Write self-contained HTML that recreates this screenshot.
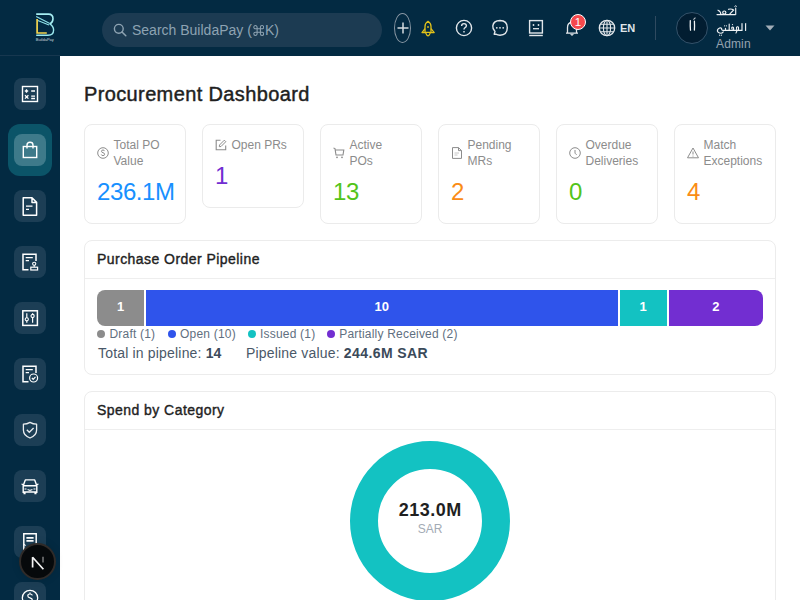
<!DOCTYPE html>
<html><head><meta charset="utf-8">
<style>
*{box-sizing:border-box;margin:0;padding:0}
html,body{width:800px;height:600px;overflow:hidden;background:#fff;font-family:"Liberation Sans",sans-serif}
.abs{position:absolute}
#hdr{position:absolute;left:0;top:0;width:800px;height:56px;background:#032a42}
#side{position:absolute;left:0;top:55px;width:60px;height:545px;background:#032a42;border-top:1px solid #17374f}
.tile{position:absolute;left:14px;width:32px;height:32px;border-radius:8px;background:#1c3e55}
.tile svg{position:absolute;left:6px;top:6px}
.card{position:absolute;top:124px;width:102px;border:1px solid #ebebeb;border-radius:8px;background:#fff}
.lbl{position:absolute;left:28.5px;top:12px;font-size:12px;line-height:16px;color:#8c8c8c;white-space:nowrap}
.ico{position:absolute;left:12px}
.val{position:absolute;left:12px;font-size:24px;line-height:36px;white-space:nowrap;letter-spacing:-0.4px}
.panel{position:absolute;left:84px;width:692px;border:1px solid #ececec;border-radius:8px;background:#fff}
.ptitle{position:absolute;left:12px;top:8px;font-size:14px;font-weight:400;line-height:20px;color:#1f1f1f;white-space:nowrap;letter-spacing:0.45px;-webkit-text-stroke:0.4px #1f1f1f}
.pline{position:absolute;left:0;top:37px;width:690px;height:1px;background:#eeeeee}
.hi{position:absolute}
.lg{top:85px;font-size:12px;line-height:16px;color:#5f6f80;white-space:nowrap;letter-spacing:0.2px}
</style></head><body>

<div id="hdr">
  <!-- logo -->
  <svg class="abs" style="left:34px;top:11px" width="22" height="32" viewBox="0 0 22 32">
    <path d="M2.2 3.1 H14.5 Q19 3.1 19 7.8 Q19 11.2 16 13" fill="none" stroke="#a6eef2" stroke-width="1.6"/>
    <path d="M2.2 5.6 L15.8 12.6 M3.8 9.6 L15 14" fill="none" stroke="#8fe3ea" stroke-width="1.1"/>
    <path d="M15.6 12.8 Q19.6 15 19.6 19 Q19.6 24.2 14 24.2 H2.2" fill="none" stroke="#9ae8ee" stroke-width="1.4"/>
    <path d="M3.1 8 V22 H12.8" fill="none" stroke="#f3d54e" stroke-width="1.7"/>
    <text x="1.8" y="30" font-size="4" fill="#c9d6de" font-family="Liberation Sans">BuildaPay</text>
  </svg>
  <!-- search -->
  <div class="abs" style="left:102px;top:13px;width:280px;height:34px;border-radius:17px;background:#1c3b52"></div>
  <svg class="abs" style="left:113px;top:23px" width="14" height="14" viewBox="0 0 14 14"><circle cx="5.8" cy="5.8" r="4.4" fill="none" stroke="#8ea3b2" stroke-width="1.4"/><path d="M9 9 L12.8 12.8" stroke="#8ea3b2" stroke-width="1.5" stroke-linecap="round"/></svg>
  <div class="abs" style="left:132px;top:20px;font-size:14px;line-height:20px;color:#8ea3b2;white-space:nowrap">Search BuildaPay (</div>
  <svg class="abs" style="left:252.5px;top:24.5px" width="11.5" height="11" viewBox="0 0 10 10"><path d="M3.5 3.5 V2 A1.5 1.5 0 1 0 2 3.5 H8 A1.5 1.5 0 1 0 6.5 2 V8 A1.5 1.5 0 1 0 8 6.5 H2 A1.5 1.5 0 1 0 3.5 8 Z" fill="none" stroke="#8ea3b2" stroke-width="0.95"/></svg>
  <div class="abs" style="left:265px;top:20px;font-size:14px;line-height:20px;color:#8ea3b2;white-space:nowrap">K)</div>
  <!-- plus -->
  <div class="abs" style="left:394px;top:13px;width:17px;height:30px;border:1px solid #8896a3;border-radius:50%"></div>
  <svg class="abs" style="left:397px;top:22px" width="12" height="12" viewBox="0 0 12 12"><path d="M6 0.5 V11.5 M0.5 6 H11.5" stroke="#d5dbe0" stroke-width="1.5"/></svg>
  <!-- rocket -->
  <svg class="abs" style="left:420px;top:19.5px" width="16" height="18" viewBox="0 0 16 18"><path d="M8 1.3 Q11 3.3 11 6.5 V12.3 H5 V6.5 Q5 3.3 8 1.3 Z" fill="none" stroke="#e2c21a" stroke-width="1.3" stroke-linejoin="round"/><path d="M5 8.6 L2 12.6 H5 M11 8.6 L14.2 12.6 H11" fill="none" stroke="#e2c21a" stroke-width="1.3" stroke-linejoin="round"/><path d="M5.6 12.8 Q8 18.8 10.4 12.8" fill="none" stroke="#e2c21a" stroke-width="1.3"/><rect x="7.2" y="6.2" width="1.6" height="1.6" fill="#e2c21a"/></svg>
  <!-- help -->
  <svg class="abs" style="left:455px;top:19px" width="18" height="18" viewBox="0 0 18 18"><circle cx="9" cy="9" r="7.6" fill="none" stroke="#e2e6ea" stroke-width="1.4"/><path d="M6.6 7 Q6.6 4.6 9 4.6 Q11.4 4.6 11.4 6.8 Q11.4 8.2 9.8 8.9 Q9 9.3 9 10.6" fill="none" stroke="#e2e6ea" stroke-width="1.4"/><rect x="8.3" y="12" width="1.4" height="1.5" fill="#e2e6ea"/></svg>
  <!-- chat -->
  <svg class="abs" style="left:491px;top:19px" width="18" height="18" viewBox="0 0 18 18"><path d="M3.2 15.2 L4 12.4 Q1.4 9.6 1.8 6.8 Q2.6 1.6 9 1.5 Q16.3 1.6 16.3 8.8 Q16.2 16 9 16.2 Q6.6 16.2 4.8 15.2 Z" fill="none" stroke="#e2e6ea" stroke-width="1.4" stroke-linejoin="round"/><circle cx="5.8" cy="8.8" r="0.9" fill="#e2e6ea"/><circle cx="9" cy="8.8" r="0.9" fill="#e2e6ea"/><circle cx="12.2" cy="8.8" r="0.9" fill="#e2e6ea"/></svg>
  <!-- monitor face -->
  <svg class="abs" style="left:528px;top:19px" width="16" height="18" viewBox="0 0 16 18"><rect x="1.6" y="1.6" width="12.8" height="12.4" fill="none" stroke="#e2e6ea" stroke-width="1.4"/><path d="M1.2 16.5 H14.8" stroke="#e2e6ea" stroke-width="1.4"/><circle cx="5.5" cy="6" r="0.9" fill="#e2e6ea"/><circle cx="10.5" cy="6" r="0.9" fill="#e2e6ea"/><path d="M5 9.7 H11" stroke="#e2e6ea" stroke-width="1.3"/></svg>
  <!-- bell -->
  <svg class="abs" style="left:565px;top:20px" width="14" height="17" viewBox="0 0 14 17"><path d="M2.5 13 V7.5 Q2.5 2.5 7 2.5 Q11.5 2.5 11.5 7.5 V13 M1 13.2 H13" fill="none" stroke="#e2e6ea" stroke-width="1.3"/><path d="M5.5 14.3 Q7 16.3 8.5 14.3" fill="#e2e6ea" stroke="#e2e6ea" stroke-width="1"/></svg>
  <div class="abs" style="left:570px;top:13.8px;width:16px;height:16px;border-radius:50%;background:#f5484c;border:1px solid #fff"></div>
  <div class="abs" style="left:570px;top:13.5px;width:16px;text-align:center;font-size:11.5px;line-height:16px;color:#fff">1</div>
  <!-- globe -->
  <svg class="abs" style="left:598px;top:19px" width="18" height="18" viewBox="0 0 18 18"><circle cx="9" cy="9" r="7.7" fill="none" stroke="#e2e6ea" stroke-width="1.3"/><ellipse cx="9" cy="9" rx="3.6" ry="7.7" fill="none" stroke="#e2e6ea" stroke-width="1.1"/><path d="M9 1.3 V16.7 M1.3 9 H16.7 M2.4 5.3 H15.6 M2.4 12.7 H15.6" stroke="#e2e6ea" stroke-width="1.1"/></svg>
  <div class="abs" style="left:620px;top:19.5px;font-size:11px;font-weight:700;line-height:16px;color:#dfe4e8;letter-spacing:-0.1px">EN</div>
  <div class="abs" style="left:655px;top:16px;width:1px;height:24px;background:#2f4a60"></div>
  <!-- avatar -->
  <div class="abs" style="left:676px;top:12px;width:32px;height:32px;border-radius:50%;background:#021d31;border:1px solid #34526a"></div>
  <svg class="abs" style="left:684px;top:14px" width="16" height="20" viewBox="684 14 16 20" fill="none" stroke="#f2f4f6" stroke-linecap="round"><path d="M690.3 20.6 Q690.1 26 690.5 30.2" stroke-width="1.3"/><path d="M694.4 21.2 Q694.7 26 694.4 30" stroke-width="1.3"/><path d="M693.8 19.4 Q694 17.6 695.2 17.9" stroke-width="0.9"/></svg>
  <svg class="abs" style="left:712px;top:2px" width="40" height="36" viewBox="712 2 40 36" fill="none" stroke="#eef1f4" stroke-width="1.15" stroke-linecap="round">
    <path d="M735.7 8 V14.6"/><path d="M734.8 6.2 Q736 5 736.6 6.2" stroke-width="1"/>
    <path d="M717 14.6 H735"/><path d="M728.5 9.3 Q731.5 8.4 733.6 10 L729.5 14.4"/>
    <circle cx="724.3" cy="12.6" r="1.6" stroke-width="1.2"/><path d="M718 10.2 Q721 11.5 720.8 14.4"/>
    <path d="M745.6 23.5 V30.4"/><path d="M742 23.5 V30.4 H729"/>
    <path d="M738.5 30.4 V27.8 Q738.5 26.6 737.2 26.8 Q736 27.2 736.6 29 Q737.5 31 736 33"/>
    <path d="M733.6 30.4 V28.2 Q733.4 26.8 732 27.2 Q731.2 28 732.2 29.2"/><circle cx="732.5" cy="24.6" r="0.6" fill="#eef1f4" stroke="none"/>
    <path d="M729.2 24 V30.4"/><path d="M725.5 28.4 V30.4"/><circle cx="724.6" cy="25.8" r="0.6" fill="#eef1f4" stroke="none"/><circle cx="726.4" cy="25.8" r="0.6" fill="#eef1f4" stroke="none"/>
    <path d="M729 30.4 H723 Q721.5 30.4 721.6 28.6 Q721 27.4 719.6 28 Q717.2 29 717.4 31.2 Q718 33.2 721 33.2 Q723 33 723.2 31.8"/>
    <circle cx="719.6" cy="35.2" r="0.6" fill="#eef1f4" stroke="none"/><circle cx="721.4" cy="35.2" r="0.6" fill="#eef1f4" stroke="none"/>
  </svg>
  <div class="abs" style="left:716px;top:36.5px;font-size:12px;line-height:14px;color:#95a3b0;white-space:nowrap;letter-spacing:0.15px">Admin</div>
  <svg class="abs" style="left:765px;top:25px" width="10" height="6" viewBox="0 0 10 6"><path d="M0.5 0.5 H9.5 L5 5.5 Z" fill="#a3aeb8"/></svg>
</div>

<div id="side">
  <div class="tile" style="top:22px"><svg width="20" height="20" viewBox="0 0 20 20"><rect x="2.5" y="2.5" width="15" height="15" fill="none" stroke="#fff" stroke-width="1.4"/><path d="M4.8 7 H8.2 M6.5 5.3 V8.7 M11.2 7 H15 M5 11.2 L8.4 14.6 M8.4 11.2 L5 14.6 M11.2 12.2 H15 M11.2 14.5 H15" stroke="#fff" stroke-width="1.3"/></svg></div>
  <div class="abs" style="left:8px;top:68px;width:44px;height:52px;border-radius:12px;background:#0b5468"></div>
  <div class="tile" style="top:78px;background:#3e7a8a"><svg width="20" height="20" viewBox="0 0 20 20"><rect x="3.3" y="6.5" width="13.4" height="11" fill="none" stroke="#fff" stroke-width="1.4"/><path d="M7 8.5 V5 Q7 2.3 10 2.3 Q13 2.3 13 5 V8.5" fill="none" stroke="#fff" stroke-width="1.4"/></svg></div>
  <div class="tile" style="top:134px"><svg width="20" height="20" viewBox="0 0 20 20"><path d="M3.2 1.8 H12 L16.6 6.4 V19.2 H3.2 Z M12 1.8 V6.4 H16.6" fill="none" stroke="#fff" stroke-width="1.5" stroke-linejoin="round"/><path d="M6 10.1 H12.5 M6 13.3 H9" stroke="#fff" stroke-width="1.3"/></svg></div>
  <div class="tile" style="top:190px"><svg width="20" height="20" viewBox="0 0 20 20"><path d="M8.5 17.7 H3 V2.2 H16 V9" fill="none" stroke="#fff" stroke-width="1.5"/><path d="M5.7 5.7 H12.8 M5.7 8.6 H9" stroke="#fff" stroke-width="1.2"/><circle cx="14.2" cy="11.8" r="1.6" fill="none" stroke="#fff" stroke-width="1.1"/><path d="M14.2 13.4 V15" stroke="#fff" stroke-width="1"/><rect x="10.8" y="15.2" width="6.8" height="2.8" fill="none" stroke="#fff" stroke-width="1.2"/></svg></div>
  <div class="tile" style="top:246px"><svg width="20" height="20" viewBox="0 0 20 20"><rect x="2.8" y="2.8" width="14.6" height="14.6" fill="none" stroke="#fff" stroke-width="1.5"/><path d="M6.8 5.2 V14.8 M12.6 5.2 V14.8" stroke="#fff" stroke-width="1.2"/><circle cx="6.8" cy="11.3" r="1.6" fill="#1c3e55" stroke="#fff" stroke-width="1.1"/><circle cx="12.6" cy="8" r="1.6" fill="#1c3e55" stroke="#fff" stroke-width="1.1"/></svg></div>
  <div class="tile" style="top:302px"><svg width="20" height="20" viewBox="0 0 20 20"><path d="M8.5 17.7 H3 V2.2 H16 V9" fill="none" stroke="#fff" stroke-width="1.5"/><path d="M5.7 5.7 H12.8 M5.7 8.6 H9" stroke="#fff" stroke-width="1.2"/><circle cx="13.6" cy="14" r="4" fill="#1c3e55" stroke="#fff" stroke-width="1.2"/><path d="M11.9 14 L13.2 15.3 L15.5 12.8" fill="none" stroke="#fff" stroke-width="1.2"/></svg></div>
  <div class="tile" style="top:358px"><svg width="20" height="20" viewBox="0 0 20 20"><path d="M10 2.4 Q13 4.2 16.6 4.2 V10 Q16.6 15.6 10 18 Q3.4 15.6 3.4 10 V4.2 Q7 4.2 10 2.4 Z" fill="none" stroke="#e8ecef" stroke-width="1.3" stroke-linejoin="round"/><path d="M6.8 9.8 L9.3 12.3 L13.6 8" fill="none" stroke="#e8ecef" stroke-width="1.3"/></svg></div>
  <div class="tile" style="top:414px"><svg width="20" height="20" viewBox="0 0 20 20"><path d="M3.2 17 V9.7 L5.3 3.9 H14.7 L16.8 9.7 V17 M3.5 17.5 H5.6 M14.4 17.5 H16.5 M3.2 9.8 H16.8 M3.2 16 H16.8" fill="none" stroke="#fff" stroke-width="1.4" stroke-linejoin="round"/><path d="M1.5 8 L3.2 8.6 M18.5 8 L16.8 8.6 M4.5 13 H6.5 M13.5 13 H15.5 M7.6 13.6 Q10 15 12.4 13.6" fill="none" stroke="#fff" stroke-width="1.2"/></svg></div>
  <div class="tile" style="top:470px"><svg width="20" height="20" viewBox="0 0 20 20"><path d="M3.8 19 V1.7 H16.2 V19" fill="none" stroke="#fff" stroke-width="1.5"/><path d="M6.4 5.9 H13.6 M6.4 8.9 H13.6" stroke="#fff" stroke-width="1.6"/><path d="M3.8 12.2 L5.6 13.6" stroke="#fff" stroke-width="1.2"/></svg></div>
  <div class="tile" style="top:526px"><svg width="20" height="20" viewBox="0 0 20 20"><circle cx="10" cy="10" r="7.7" fill="none" stroke="#fff" stroke-width="1.3"/><path d="M12.4 7.4 Q12 6 10 6 Q7.8 6 7.8 7.8 Q7.8 9.4 10 9.9 Q12.4 10.4 12.4 12.2 Q12.4 14 10 14 Q7.8 14 7.6 12.5 M10 4.4 V6 M10 14 V15.6" fill="none" stroke="#fff" stroke-width="1.2"/></svg></div>
</div>

<!-- Next.js dev button -->
<div class="abs" style="left:19px;top:543px;width:37px;height:37px;border-radius:50%;background:#06090b;border:2px solid #2f2b29;box-shadow:0 0 8px rgba(0,0,0,0.12)"></div>
<svg class="abs" style="left:28px;top:553px" width="19" height="19" viewBox="0 0 19 19"><path d="M4.6 14.6 V4.2 L15.4 16.2" fill="none" stroke="#f4f4f4" stroke-width="1.7" stroke-linejoin="bevel"/><path d="M15 3.8 V9.5" stroke="#9a9a9a" stroke-width="1.2"/></svg>

<!-- main -->
<div class="abs" style="left:84px;top:82px;font-size:20px;font-weight:400;line-height:24px;color:#1f1f1f;letter-spacing:0.37px;-webkit-text-stroke:0.45px #1f1f1f;white-space:nowrap">Procurement Dashboard</div>

<div class="card" style="left:84px;height:100px">
  <svg class="ico" style="top:22px" width="12" height="12" viewBox="0 0 12 12"><circle cx="6" cy="6" r="5.3" fill="none" stroke="#8c8c8c" stroke-width="1"/><path d="M7.5 4.1 Q7.2 3 6 3 Q4.5 3 4.5 4.3 Q4.5 5.4 6 5.7 Q7.6 6 7.6 7.3 Q7.6 8.6 6 8.6 Q4.5 8.6 4.3 7.5" fill="none" stroke="#8c8c8c" stroke-width="1"/></svg>
  <div class="lbl">Total PO<br>Value</div>
  <div class="val" style="top:49px;color:#1890ff">236.1M</div>
</div>
<div class="card" style="left:202px;height:84px">
  <svg class="ico" style="top:14px" width="12" height="12" viewBox="0 0 12 12"><path d="M5.5 1.3 H1.2 V10.8 H10.7 V6.5" fill="none" stroke="#8c8c8c" stroke-width="1.1"/><path d="M9.3 1.2 L10.8 2.7 L6 7.5 L4.3 7.7 L4.5 6 Z" fill="none" stroke="#8c8c8c" stroke-width="1"/></svg>
  <div class="lbl">Open PRs</div>
  <div class="val" style="top:33px;color:#722ed1">1</div>
</div>
<div class="card" style="left:320px;height:100px">
  <svg class="ico" style="top:22px" width="12" height="12" viewBox="0 0 12 12"><path d="M0.5 1 L2 1.6 L3 8 H10 L10.8 3 H2.3" fill="none" stroke="#8c8c8c" stroke-width="1.1"/><circle cx="4" cy="10.3" r="0.9" fill="#8c8c8c"/><circle cx="9" cy="10.3" r="0.9" fill="#8c8c8c"/></svg>
  <div class="lbl">Active<br>POs</div>
  <div class="val" style="top:49px;color:#52c41a">13</div>
</div>
<div class="card" style="left:438px;height:100px">
  <svg class="ico" style="top:22px" width="12" height="12" viewBox="0 0 12 12"><path d="M1.5 0.6 H7.5 L10.5 3.6 V11.4 H1.5 Z M7.5 0.6 V3.6 H10.5" fill="none" stroke="#8c8c8c" stroke-width="1"/><path d="M3.5 6 H8 M3.5 8 H6.5" stroke="#c0c0c0" stroke-width="0.9"/></svg>
  <div class="lbl">Pending<br>MRs</div>
  <div class="val" style="top:49px;color:#fa8c16">2</div>
</div>
<div class="card" style="left:556px;height:100px">
  <svg class="ico" style="top:22px" width="12" height="12" viewBox="0 0 12 12"><circle cx="6" cy="6" r="5.3" fill="none" stroke="#8c8c8c" stroke-width="1"/><path d="M6 3 V6.2 L7.6 7.8" fill="none" stroke="#8c8c8c" stroke-width="1"/></svg>
  <div class="lbl">Overdue<br>Deliveries</div>
  <div class="val" style="top:49px;color:#52c41a">0</div>
</div>
<div class="card" style="left:674px;height:100px">
  <svg class="ico" style="top:22px" width="12" height="12" viewBox="0 0 12 12"><path d="M6 1 L11.5 10.8 H0.5 Z" fill="none" stroke="#8c8c8c" stroke-width="1" stroke-linejoin="round"/><path d="M6 4.5 V7.5" stroke="#8c8c8c" stroke-width="1"/><circle cx="6" cy="9" r="0.55" fill="#8c8c8c"/></svg>
  <div class="lbl">Match<br>Exceptions</div>
  <div class="val" style="top:49px;color:#fa8c16">4</div>
</div>

<!-- pipeline -->
<div class="panel" style="top:240px;height:135px">
  <div class="ptitle" style="top:8px">Purchase Order Pipeline</div>
  <div class="pline"></div>
  <div class="abs" style="left:12px;top:49px;width:666px;height:36px;border-radius:8px;overflow:hidden;display:flex;gap:2px">
    <div style="flex:1;background:#8c8c8c;color:#fff;font-size:13px;font-weight:700;display:flex;align-items:center;justify-content:center;padding-bottom:4px">1</div>
    <div style="flex:10;background:#2f54eb;color:#fff;font-size:13px;font-weight:700;display:flex;align-items:center;justify-content:center;padding-bottom:4px">10</div>
    <div style="flex:1;background:#13c2c2;color:#fff;font-size:13px;font-weight:700;display:flex;align-items:center;justify-content:center;padding-bottom:4px">1</div>
    <div style="flex:2;background:#722ed1;color:#fff;font-size:13px;font-weight:700;display:flex;align-items:center;justify-content:center;padding-bottom:4px">2</div>
  </div>
  <div class="abs" style="left:12px;top:89px;width:8px;height:8px;border-radius:50%;background:#8c8c8c"></div>
  <div class="abs lg" style="left:24.5px">Draft (1)</div>
  <div class="abs" style="left:83.3px;top:89px;width:8px;height:8px;border-radius:50%;background:#2f54eb"></div>
  <div class="abs lg" style="left:95px">Open (10)</div>
  <div class="abs" style="left:163px;top:89px;width:8px;height:8px;border-radius:50%;background:#13c2c2"></div>
  <div class="abs lg" style="left:175px">Issued (1)</div>
  <div class="abs" style="left:241.8px;top:89px;width:8px;height:8px;border-radius:50%;background:#722ed1"></div>
  <div class="abs lg" style="left:254.2px">Partially Received (2)</div>
  <div class="abs" style="left:13px;top:101.5px;font-size:14px;line-height:20px;color:#4a5868;white-space:nowrap;letter-spacing:0.18px">Total in pipeline: <b style="color:#3b4a5a;letter-spacing:0">14</b></div>
  <div class="abs" style="left:161px;top:101.5px;font-size:14px;line-height:20px;color:#4a5868;white-space:nowrap;letter-spacing:0.18px">Pipeline value: <b style="color:#3b4a5a;letter-spacing:0.4px">244.6M SAR</b></div>
</div>

<!-- spend -->
<div class="panel" style="top:391px;height:260px">
  <div class="ptitle" style="top:8px">Spend by Category</div>
  <div class="pline"></div>
</div>
<svg class="abs" style="left:350px;top:441px" width="160" height="160" viewBox="0 0 160 160"><circle cx="80" cy="80" r="66" fill="none" stroke="#13c2c2" stroke-width="28"/></svg>
<div class="abs" style="left:380px;top:498.5px;width:100px;text-align:center;font-size:18px;font-weight:700;line-height:22px;color:#1f1f1f;letter-spacing:0.45px;text-indent:0.45px">213.0M</div>
<div class="abs" style="left:380px;top:521px;width:100px;text-align:center;font-size:12px;line-height:16px;color:#a3abb5">SAR</div>

</body></html>
